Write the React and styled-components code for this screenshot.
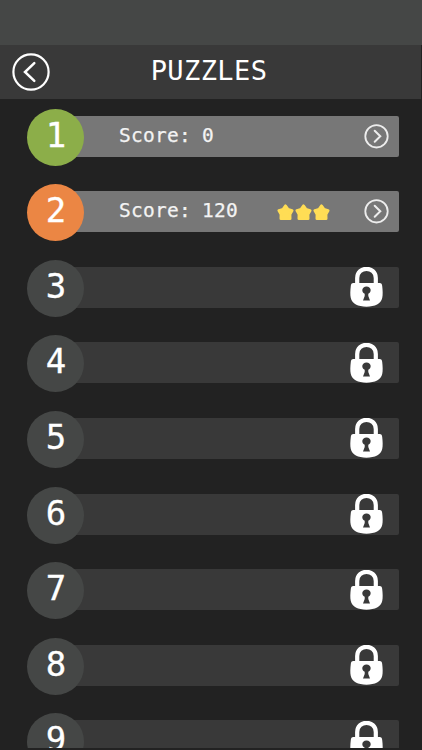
import styled, { createGlobalStyle } from "styled-components";

const GlobalStyle = createGlobalStyle`
  body {
    margin: 0;
    background: #222222;
  }
`;

const Screen = styled.div`
  display: flex;
  flex-direction: column;
  box-sizing: border-box;
  height: 750px;
  overflow: hidden;
  padding-bottom: 2px;
  background: #222222;
  color: #ffffff;
  font-family: "DejaVu Sans Mono", "Liberation Mono", monospace;
`;

const StatusBar = styled.div`
  flex: none;
  height: 45px;
  background: #454746;
`;

const Header = styled.header`
  display: grid;
  grid-template-columns: 50px 1fr 53px;
  align-items: center;
  flex: none;
  height: 54px;
  margin-right: 1px;
  background: #393939;
`;

const BackButton = styled.button`
  display: flex;
  padding: 0 0 0 12px;
  border: 0;
  background: none;
  color: #ffffff;
`;

const Title = styled.h1`
  margin: 0;
  padding-bottom: 3px;
  font-size: 27px;
  font-weight: normal;
  line-height: 32px;
  letter-spacing: 0.4px;
  text-align: center;
`;

const List = styled.ul`
  display: flex;
  flex: 1;
  flex-direction: column;
  gap: 18.6px;
  min-height: 0;
  overflow: hidden;
  margin: 0;
  padding: 9.6px 23px 0 27.4px;
  list-style: none;
`;

const Row = styled.li`
  display: flex;
  align-items: center;
  flex: none;
  height: 57px;
`;

const Badge = styled.div`
  z-index: 1;
  flex: none;
  box-sizing: border-box;
  width: 57px;
  height: 57px;
  padding-bottom: 4px;
  border-radius: 50%;
  background: ${({ $color }) => $color};
  font-size: 34px;
  line-height: 53px;
  text-align: center;
  -webkit-text-stroke: 0.3px #ffffff;
`;

const Bar = styled.div`
  display: grid;
  grid-template-columns: 158px 1fr 33px;
  align-items: center;
  flex: 1;
  box-sizing: border-box;
  height: 41px;
  margin: 0 0 2px -28px;
  padding: 0 ${({ $locked }) => ($locked ? "16px" : "2px")} 0 62.6px;
  border-radius: 2px;
  background: ${({ $locked }) => ($locked ? "#393939" : "#777777")};
`;

const Score = styled.span`
  padding-bottom: 1px;
  color: #f3f3f3;
  font-size: 19.5px;
  line-height: 24px;
  letter-spacing: 0.25px;
  word-spacing: -1px;
  white-space: nowrap;
  -webkit-text-stroke: 0.25px #f3f3f3;
`;

const Stars = styled.div`
  display: flex;
  gap: 1px;
  padding-top: 1px;
  color: #ffdd55;
`;

const Action = styled.div`
  display: flex;
  grid-column: 3;
`;

const puzzles = [
  { id: 1, color: "#8cae49", score: 0, stars: 0 },
  { id: 2, color: "#eb8644", score: 120, stars: 3 },
  { id: 3 },
  { id: 4 },
  { id: 5 },
  { id: 6 },
  { id: 7 },
  { id: 8 },
  { id: 9 },
];

function BackIcon() {
  return (
    <svg width="38" height="38" viewBox="0 0 38 38" fill="none" stroke="currentColor">
      <circle cx="19" cy="19" r="17.6" strokeWidth="2.2" />
      <path d="M22.3 10.2 L13 19 L22.3 27.8" strokeWidth="2.5" strokeLinecap="round" />
    </svg>
  );
}

function PlayIcon() {
  return (
    <svg width="25" height="25" viewBox="0 0 25 25" fill="none" stroke="#ededed">
      <circle cx="12.5" cy="12.3" r="11.2" strokeWidth="1.8" />
      <path d="M10.7 6.8 L16.3 12.3 L10.7 17.8" strokeWidth="2" strokeLinecap="round" />
    </svg>
  );
}

function StarIcon() {
  return (
    <svg width="17" height="17" viewBox="0 0 17 17" fill="currentColor">
      <path
        d="M8.5 1.8 L11 5.4 L15.1 6.6 L13 10.4 L13.1 14.7 L8.5 14.4 L3.9 14.7 L4 10.4 L1.9 6.6 L6 5.4 Z"
        stroke="currentColor"
        strokeWidth="2.8"
        strokeLinejoin="round"
      />
    </svg>
  );
}

function LockIcon() {
  return (
    <svg width="33" height="40" viewBox="0 0 33 40">
      <path
        d="M7.2 18 V11 C7.2 -1.2 25.8 -1.2 25.8 11 V18"
        fill="none"
        stroke="#ffffff"
        strokeWidth="4.2"
      />
      <path
        d="M3.5 16 H29.5 C31.5 16 32 17.2 32.2 19 C32.7 23 33 28 32.2 31 C31 36.5 25 39.7 16.5 39.7 C8 39.7 2 36.5 .8 31 C0 28 .3 23 .8 19 C1 17.2 1.5 16 3.5 16 Z"
        fill="#ffffff"
      />
      <path
        d="M16.5 19.6 C21.4 19.6 22 25.3 18.3 26.8 V29 L20 33.5 H13 L14.7 29 V26.8 C11 25.3 11.6 19.6 16.5 19.6 Z"
        fill="#393939"
      />
    </svg>
  );
}

function PuzzleRow({ id, color = "#454746", score, stars }) {
  const locked = score === undefined;

  return (
    <Row>
      <Badge $color={color}>{id}</Badge>
      <Bar $locked={locked}>
        {!locked && <Score>Score: {score}</Score>}
        {stars > 0 && (
          <Stars>
            {Array.from({ length: stars }, (_, i) => (
              <StarIcon key={i} />
            ))}
          </Stars>
        )}
        <Action>{locked ? <LockIcon /> : <PlayIcon />}</Action>
      </Bar>
    </Row>
  );
}

export default function App() {
  return (
    <>
      <GlobalStyle />
      <Screen>
        <StatusBar />
        <Header>
          <BackButton aria-label="Back">
            <BackIcon />
          </BackButton>
          <Title>PUZZLES</Title>
        </Header>
        <List>
          {puzzles.map((puzzle) => (
            <PuzzleRow key={puzzle.id} {...puzzle} />
          ))}
        </List>
      </Screen>
    </>
  );
}
